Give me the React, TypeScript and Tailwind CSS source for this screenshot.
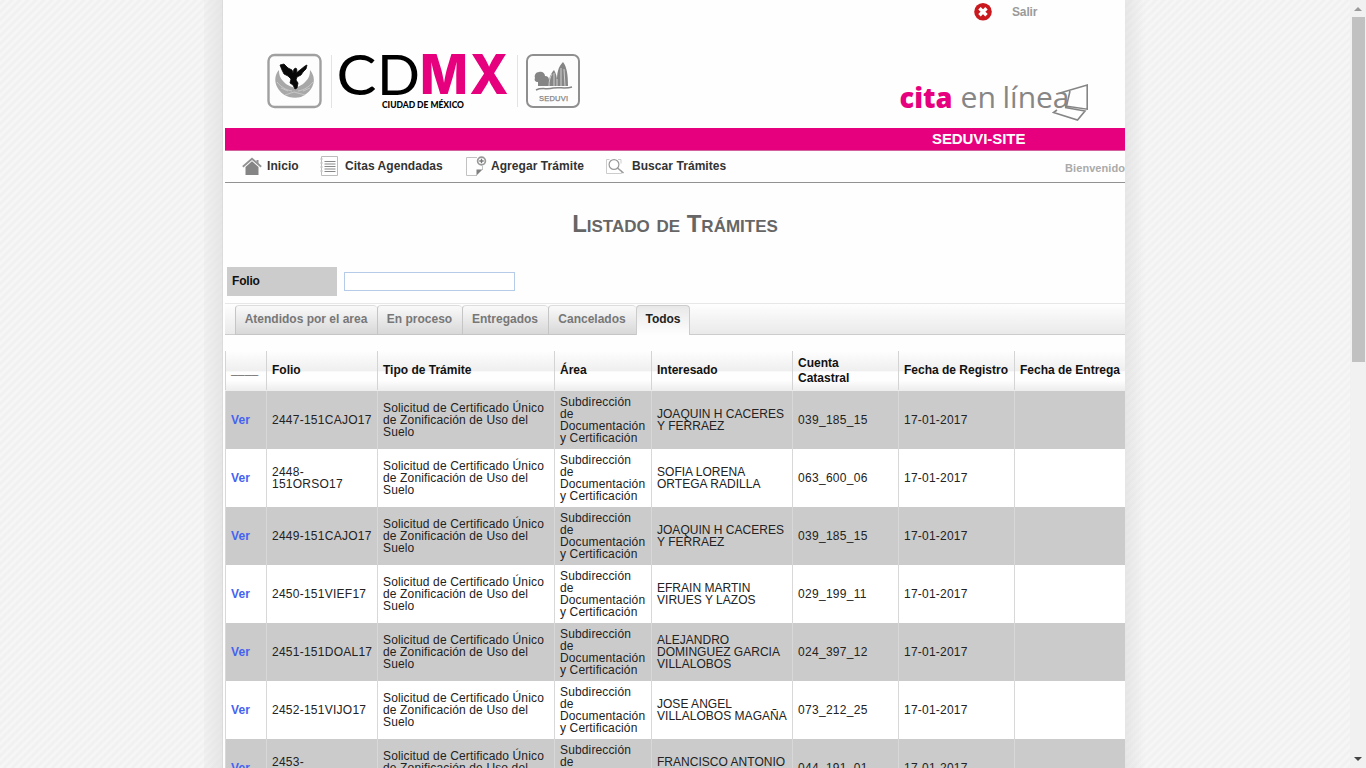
import React from "react";

type Row = { folio: string[]; who: string[]; cuenta: string };

const rows: Row[] = [
  { folio: ["2447-151CAJO17"], who: ["JOAQUIN H CACERES", "Y FERRAEZ"], cuenta: "039_185_15" },
  { folio: ["2448-", "151ORSO17"], who: ["SOFIA LORENA", "ORTEGA RADILLA"], cuenta: "063_600_06" },
  { folio: ["2449-151CAJO17"], who: ["JOAQUIN H CACERES", "Y FERRAEZ"], cuenta: "039_185_15" },
  { folio: ["2450-151VIEF17"], who: ["EFRAIN MARTIN", "VIRUES Y LAZOS"], cuenta: "029_199_11" },
  { folio: ["2451-151DOAL17"], who: ["ALEJANDRO", "DOMINGUEZ GARCIA", "VILLALOBOS"], cuenta: "024_397_12" },
  { folio: ["2452-151VIJO17"], who: ["JOSE ANGEL", "VILLALOBOS MAGAÑA"], cuenta: "073_212_25" },
  { folio: ["2453-", "151FRAN17"], who: ["FRANCISCO ANTONIO", "GARCIA"], cuenta: "044_191_01" },
];

const columns = ["____", "Folio", "Tipo de Trámite", "Área", "Interesado", "Cuenta Catastral", "Fecha de Registro", "Fecha de Entrega"];
const grid = "grid w-[900px] grid-cols-[41px_111px_177px_97px_141px_106px_116px_111px]";

function Lines({ items }: { items: string[] }) {
  return (
    <div>
      {items.map((t) => (
        <div key={t} className="whitespace-nowrap">{t}</div>
      ))}
    </div>
  );
}

function CityLogo() {
  return (
    <svg width="320" height="60" viewBox="262 50 320 60" className="overflow-visible">
      <rect x="268.5" y="55" width="52" height="52" rx="6" fill="#fdfdfd" stroke="#a0a0a0" strokeWidth="2.400" />
      <path d="M279 70c-5 5-5 14 0 20 3 4 7 6 10 7 4 1 8 1 12 0 4-2 7-4 10-8 4-6 4-13-1-19 0 5-1 8-4 11-3 4-7 5-11 7-5-2-9-3-12-7-3-3-4-6-4-11z" fill="#a8a8a8" />
      <path d="M277 82c4 5 9 8 15 9m21-9c-4 5-9 8-15 9M285 95l9-3 11 3M281 88l7 3m22-3-7 3" stroke="#cfcfcf" fill="none" strokeWidth=".8" />
      <path d="M280 65l4-1 4 4 4 2 1 3 1-4 2-1 1 2-1 3 4-3 5-4 2-1-1 4-3 3-2 3-4 2-1 3 2 3-1 5-2 1-2-4-3-2 1-4-3-3-4-2-2-4z" fill="#080808" stroke="#080808" strokeWidth=".8" />
      <path d="M331.500 55v53M517.500 55v52" stroke="#e3e3e3" />
      <g fontFamily="Lato, sans-serif" fontSize="56">
        <text x="336.500" y="94.500" textLength="40" lengthAdjust="spacingAndGlyphs">C</text>
        <text x="377" y="94.500" textLength="43" lengthAdjust="spacingAndGlyphs">D</text>
        <text x="420" y="94" fill="#e6007e" fontFamily="Inter, sans-serif" fontWeight="800" fontSize="54.500" textLength="48" lengthAdjust="spacingAndGlyphs">M</text>
        <text x="469.500" y="94" fill="#e6007e" fontFamily="Inter, sans-serif" fontWeight="800" fontSize="54.500" textLength="39" lengthAdjust="spacingAndGlyphs">X</text>
      </g>
      <text x="382" y="108" fontFamily="Lato, sans-serif" fontWeight="900" fontSize="9" textLength="82" lengthAdjust="spacingAndGlyphs">CIUDAD DE MÉXICO</text>
      <rect x="527" y="55" width="52" height="52" rx="6" fill="#fdfdfd" stroke="#8f8f8f" strokeWidth="2" />
      <path d="M538 86v-4c-3 0-4-2-3-4-1-3 1-6 4-6 3-1 6 1 6 4 3 0 4 2 4 4 1-5 3-8 5-10 2 3 3 7 3 11 0-8 1-14 6-19 4 5 5 13 5 24z" fill="#858585" />
      <path d="M549 86c0-5 1-9 3-12m2 12V73m3 13V79m4 7V68m4 18-1-17" stroke="#d8d8d8" fill="none" strokeWidth=".9" />
      <path d="M536 90c6-3 11 0 17-2 7-1 12 1 19-1" fill="none" stroke="#858585" strokeWidth="1.500" />
      <text x="539" y="101" fontFamily="Liberation Sans, sans-serif" fontSize="7.500" fill="#858585" stroke="#858585" strokeWidth=".25" textLength="29">SEDUVI</text>
    </svg>
  );
}

function CitaLogo() {
  return (
    <svg width="200" height="44" viewBox="895 80 200 44" fontFamily="Open Sans, sans-serif" fontSize="29">
      <text x="899.500" y="108" fontWeight="800" fill="#e6007e" textLength="53" lengthAdjust="spacingAndGlyphs">cita</text>
      <text x="960.500" y="108" fill="#868686" textLength="35.500" lengthAdjust="spacingAndGlyphs">en</text>
      <text x="1002.500" y="108" fill="#868686" textLength="67" lengthAdjust="spacingAndGlyphs">línea</text>
      <path d="M1060 93l27.200-8v24.200l-22-3.200M1070 91l-3.500 15M1057 110l-3.500 2.500 24 7.500 7.500-9-20-3.500" fill="none" stroke="#858585" strokeWidth="1.600" />
    </svg>
  );
}

function HomeIcon() {
  return (
    <svg width="20" height="18" viewBox="0 0 20 18">
      <path d="M.8 9.800 10 1.800l9.200 8" fill="none" stroke="#929292" strokeWidth="1.800" />
      <path d="M3.500 10 10 4.300l6.500 5.700v8h-13z" fill="#858585" />
      <path d="M14.500 3h2v4l-2-2z" fill="#929292" />
    </svg>
  );
}

function ListIcon() {
  return (
    <svg width="20" height="20" viewBox="0 0 20 20">
      <path d="M1.500.5h16v19h-16z" fill="#fff" stroke="#bcbcbc" />
      <path d="M0 3h3M0 7h3M0 11h3M0 15h3" stroke="#ccc" />
      <path d="M4.500 5.500h11M4.500 8h11M4.500 10.500h11M4.500 13h11M4.500 15.500h11" stroke="#888" />
    </svg>
  );
}

function AddIcon() {
  return (
    <svg width="22" height="21" viewBox="0 0 22 21">
      <path d="M11 1.500H.5v18H11M16.500 10v4" fill="none" stroke="#c2c2c2" />
      <path d="M10.500 13.500h6l-6 6z" fill="#808080" />
      <circle cx="15.500" cy="5" r="3.900" fill="#fff" stroke="#999" strokeWidth="1.700" />
      <path d="M15.500 2.800v4.400M13.300 5h4.400" stroke="#777" strokeWidth="1.300" />
    </svg>
  );
}

function SearchIcon() {
  return (
    <svg width="20" height="18" viewBox="0 0 20 18">
      <path d="M.5 2.500v14h15v-3M.5 2.500h3M12 2.500h3v4" fill="none" stroke="#ccc" />
      <circle cx="8" cy="7.500" r="4.900" fill="#fff" stroke="#999" strokeWidth="1.200" />
      <path d="m11.500 11 6 5" stroke="#999" strokeWidth="1.600" />
    </svg>
  );
}

function Tab({ label, size, active }: { label: string; size: string; active?: boolean }) {
  return (
    <div
      className={`${size} box-border h-[30px] whitespace-nowrap rounded-t-[4px] border-l border-t pt-[6px] text-center text-[12px] leading-[15px] font-bold ${
        active
          ? "border-r border-[#ccc] bg-linear-to-b from-[#e8e8e8] to-[#fefefe] text-[#222]"
          : "border-b border-t-[#ddd] border-b-[#c5c5c5] border-l-[#c5c5c5] bg-linear-to-b from-[#fafafa] to-[#d8d8d8] pr-[1px] text-[#777]"
      }`}
    >
      {label}
    </div>
  );
}

export default function App() {
  return (
    <div className="flex h-screen w-full overflow-hidden bg-[#f3f3f3] font-['Liberation_Sans',Arial,sans-serif] text-[12px] leading-[12px] text-[#222]">
      <div className="flex flex-1 bg-[repeating-linear-gradient(135deg,#f7f7f7_0px,#f0f0f0_2.828px,#f7f7f7_5.657px)]">
        <div className="flex w-[223px] justify-end">
          <div className="w-[19px] border-r border-[#dcdcdc] bg-linear-to-r from-[#dddddd30] to-[#dddddda0]" />
        </div>
        <main className="h-full w-[902px] overflow-hidden bg-[#fefefe] pl-[2px]">
          <div className="flex h-[24px] items-center pl-[749px]">
            <svg width="18" height="18" viewBox="0 0 18 18">
              <circle cx="9" cy="8.800" r="8.800" fill="#c9191e" />
              <path d="m5.500 5.300 7 7m0-7-7 7" stroke="#fff" strokeWidth="3.400" />
            </svg>
            <span className="ml-[20px] font-bold tracking-[-0.150px] text-[#9a9a9a]">Salir</span>
          </div>
          <header className="flex h-[104px] pl-[37px]">
            <div className="pt-[26px]"><CityLogo /></div>
            <div className="pt-[56px] pl-[313px]"><CitaLogo /></div>
          </header>
          <div className="h-[23px] w-[900px] border-b border-[#d2629c] bg-[#e6007e] pl-[707px] text-[15px] leading-[22px] font-bold tracking-[-0.080px] whitespace-nowrap text-white">SEDUVI-SITE</div>
          <nav className="flex h-[32px] w-[900px] items-start border-b border-[#929292] font-bold tracking-[0.060px] whitespace-nowrap text-[#333]">
            <div className="flex h-[30px] w-[95px] items-center gap-[5px] pl-[17px]"><HomeIcon /><span>Inicio</span></div>
            <div className="flex h-[30px] w-[146px] items-center gap-[5px]"><ListIcon /><span>Citas Agendadas</span></div>
            <div className="flex h-[30px] w-[140px] items-center gap-[3px]"><AddIcon /><span>Agregar Trámite</span></div>
            <div className="flex h-[30px] w-[130px] items-center gap-[6px]"><SearchIcon /><span>Buscar Trámites</span></div>
            <span className="ml-auto pt-[11px] text-[11px] text-[#aaa]">Bienvenido</span>
          </nav>
          <div className="h-[84px] w-[900px] pt-[27px] text-center">
            <h1 className="text-[24px] leading-[27px] font-bold text-[#666] [font-variant-caps:small-caps]">Listado de Trámites</h1>
          </div>
          <div className="flex h-[36px] items-start pl-[2px]">
            <label className="h-[29px] w-[110px] bg-[#ccc] pl-[5px] leading-[28px] font-bold tracking-[-0.200px] text-[#111]">Folio</label>
            <input className="mt-[5px] ml-[7px] h-[19px] w-[171px] border border-[#b5cbe8] bg-white outline-none" />
          </div>
          <div className="flex h-[32px] w-[900px] items-end border-t border-[#e7e7e7] bg-linear-to-b from-[#fefefe] to-[#e9e9e9]">
            <div className="h-full w-[10px] border-b border-[#ccc]" />
            <Tab size="w-[142px]" label="Atendidos por el area" />
            <Tab size="w-[85px]" label="En proceso" />
            <Tab size="w-[86px]" label="Entregados" />
            <Tab size="w-[88px]" label="Cancelados" />
            <Tab size="w-[54px]" label="Todos" active />
            <div className="h-full flex-1 border-b border-[#ccc]" />
          </div>
          <div className={`${grid} mt-[16px] h-[40px] bg-[#ededed]`}>
            {columns.map((c) => (
              <div key={c} className="flex h-[39px] items-center border-l border-[#d4d4d4] bg-[linear-gradient(#fefefe_0%,#efefef_50%,#fefefe_54%,#fefefe_75%,#eeeeee_100%)] pl-[5px] leading-[15px] font-bold text-[#111]">
                <span className={c === "Cuenta Catastral" ? "w-[70px]" : c === "____" ? "tracking-[0.200px]" : "whitespace-nowrap"}>{c}</span>
              </div>
            ))}
          </div>
          {rows.map((r, i) => (
            <div key={i} className={`${grid} h-[58px] ${i % 2 ? "bg-white" : "bg-[#cbcbcb]"} tracking-[0.140px] *:flex *:items-center *:border-l *:border-[#d8d8d8] *:pl-[5px]`}>
              <div className="font-bold text-[#4563f0]">Ver</div>
              <div className="tracking-[0.250px]"><Lines items={r.folio} /></div>
              <div><Lines items={["Solicitud de Certificado Único", "de Zonificación de Uso del", "Suelo"]} /></div>
              <div><Lines items={["Subdirección", "de", "Documentación", "y Certificación"]} /></div>
              <div className="tracking-[0.020px]"><Lines items={r.who} /></div>
              <div className="tracking-[0.300px]">{r.cuenta}</div>
              <div className="tracking-[0.220px]">17-01-2017</div>
              <div />
            </div>
          ))}
        </main>
        <div className="w-[21px] bg-linear-to-r from-[#dddddda0] to-[#dddddd00]" />
      </div>
      <aside className="flex w-[16px] flex-col items-center bg-[#f1f1f1]">
        <svg width="16" height="17" viewBox="0 0 16 17"><path d="m4 11 4-4 4 4z" fill="#999" /></svg>
        <div className="h-[345px] w-[13px] bg-[#c1c1c1]" />
        <svg className="mt-auto" width="16" height="17" viewBox="0 0 16 17"><path d="m4 6 4 4 4-4z" fill="#444" /></svg>
      </aside>
    </div>
  );
}
